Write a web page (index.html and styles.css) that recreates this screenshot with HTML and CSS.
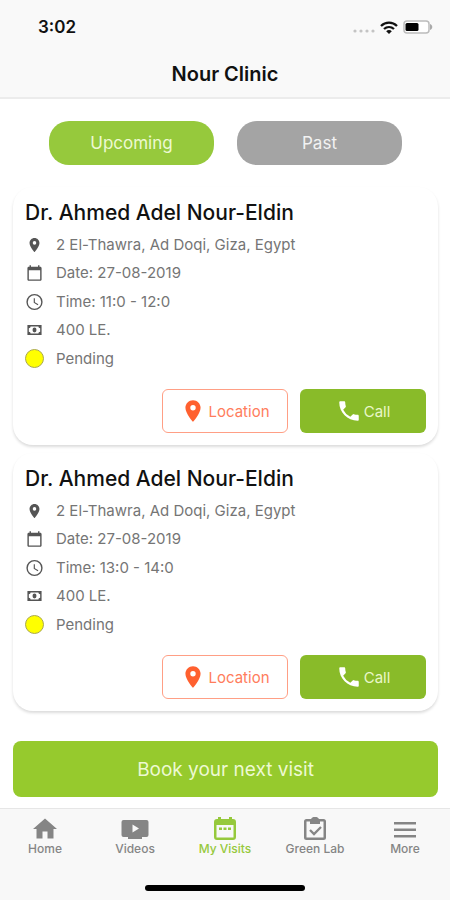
FILE: index.html
```html
<!DOCTYPE html>
<html lang="en">
<head>
<meta charset="utf-8">
<meta name="viewport" content="width=device-width, initial-scale=1">
<title>Nour Clinic</title>
<link rel="stylesheet" href="styles.css">
</head>
<body>
<svg class="sprite" aria-hidden="true">
  <symbol id="pin" viewBox="0 0 24 24"><path d="M12 2C8.130 2 5 5.130 5 9c0 5.250 7 13 7 13s7-7.750 7-13c0-3.870-3.130-7-7-7zm0 9.500a2.500 2.500 0 1 1 0-5 2.500 2.500 0 0 1 0 5z"/></symbol>
  <symbol id="calendar" viewBox="0 0 24 24"><path d="M20 3h-1V1h-2v2H7V1H5v2H4c-1.100 0-2 .9-2 2v16c0 1.100.9 2 2 2h16c1.100 0 2-.9 2-2V5c0-1.100-.9-2-2-2zm0 18H4V8h16v13z"/></symbol>
  <symbol id="clock" viewBox="1 1 22 22"><path d="M12 1.500a10.500 10.500 0 1 0 0 21 10.500 10.500 0 0 0 0-21zm0 19.200a8.700 8.700 0 1 1 0-17.400 8.700 8.700 0 0 1 0 17.400zM12.500 7H11v6l5.200 3.200.8-1.300-4.500-2.700z"/></symbol>
  <symbol id="cash" viewBox="0 0 24 24"><path fill-rule="evenodd" d="M2 5h20v14H2zM6.500 7a2.500 2.500 0 0 1-2.500 2.500v5a2.500 2.500 0 0 1 2.500 2.500h11a2.500 2.500 0 0 1 2.500-2.500v-5a2.500 2.500 0 0 1-2.500-2.500z"/><ellipse cx="12" cy="12" rx="2.800" ry="3.400"/></symbol>
  <symbol id="phone" viewBox="0 0 24 24"><path d="M20 15.500c-1.250 0-2.450-.2-3.570-.57a1.020 1.020 0 0 0-1.020.24l-2.200 2.200a15.070 15.070 0 0 1-6.590-6.580l2.200-2.210c.28-.27.36-.66.25-1.010A11.360 11.360 0 0 1 8.500 4c0-.55-.45-1-1-1H4c-.55 0-1 .45-1 1 0 9.390 7.610 17 17 17 .55 0 1-.45 1-1v-3.500c0-.55-.45-1-1-1z"/></symbol>
</svg>
<header class="header">
  <div class="status">
    <span class="time">3:02</span>
    <span class="indicators">
      <svg class="dots" viewBox="0 0 22 4" aria-hidden="true"><g fill="#c4c4c4"><circle cx="2" cy="2" r="1.600"/><circle cx="8" cy="2" r="1.600"/><circle cx="14" cy="2" r="1.600"/><circle cx="20" cy="2" r="1.600"/></g></svg>
      <svg class="wifi" viewBox="0 0 18 13" aria-hidden="true"><g fill="none" stroke="#111" stroke-width="2.300"><path d="M1 5c4.500-4.400 11.500-4.400 16 0"/><path d="M4 8c2.900-2.600 7.100-2.600 10 0"/></g><path fill="#111" d="M9 13 6.200 10.200c1.500-1.500 4.100-1.500 5.600 0z"/></svg>
      <svg class="battery" viewBox="0 0 30 14" aria-hidden="true"><rect x="1" y="1" width="25" height="12" rx="3" fill="#fff" stroke="#bcbcbc" stroke-width="1.500"/><path fill="#aaa" d="M27 4c3 1 3 5 0 6z"/><rect x="2.500" y="3" width="13" height="8" rx="1.500" fill="#000"/></svg>
    </span>
  </div>
  <h1 class="heading">Nour Clinic</h1>
</header>
<main class="main">
  <div class="filters">
    <button class="filter filter-active" type="button">Upcoming</button>
    <button class="filter" type="button">Past</button>
  </div>
  <div class="visits">
    <article class="card">
      <h2 class="doctor">Dr. Ahmed Adel Nour-Eldin</h2>
      <ul class="details">
        <li><svg class="icon"><use href="#pin"/></svg>2 El-Thawra, Ad Doqi, Giza, Egypt</li>
        <li><svg class="icon"><use href="#calendar"/></svg>Date: 27-08-2019</li>
        <li><svg class="icon"><use href="#clock"/></svg>Time: 11:0 - 12:0</li>
        <li><svg class="icon"><use href="#cash"/></svg>400 LE.</li>
        <li><span class="state"></span>Pending</li>
      </ul>
      <div class="actions">
        <button class="action location" type="button"><svg class="action-icon"><use href="#pin"/></svg>Location</button>
        <button class="action call" type="button"><svg class="action-icon"><use href="#phone"/></svg>Call</button>
      </div>
    </article>
    <article class="card">
      <h2 class="doctor">Dr. Ahmed Adel Nour-Eldin</h2>
      <ul class="details">
        <li><svg class="icon"><use href="#pin"/></svg>2 El-Thawra, Ad Doqi, Giza, Egypt</li>
        <li><svg class="icon"><use href="#calendar"/></svg>Date: 27-08-2019</li>
        <li><svg class="icon"><use href="#clock"/></svg>Time: 13:0 - 14:0</li>
        <li><svg class="icon"><use href="#cash"/></svg>400 LE.</li>
        <li><span class="state"></span>Pending</li>
      </ul>
      <div class="actions">
        <button class="action location" type="button"><svg class="action-icon"><use href="#pin"/></svg>Location</button>
        <button class="action call" type="button"><svg class="action-icon"><use href="#phone"/></svg>Call</button>
      </div>
    </article>
  </div>
  <button class="book" type="button">Book your next visit</button>
</main>
<footer class="footer">
  <nav class="tabs">
    <a class="tab" href="#home"><svg class="tab-icon" viewBox="0 0 28 24"><path d="M11.500 21.500v-7h5v7h6V12H26L14 1.500 2 12h3.500v9.500z"/></svg>Home</a>
    <a class="tab" href="#videos"><svg class="tab-icon" viewBox="0 0 28 24"><path fill-rule="evenodd" d="M2.500 3h23q2 0 2 2v13q0 2-2 2H21v2H7v-2H2.500q-2 0-2-2V5q0-2 2-2zM11.500 7.500v8l6.500-4z"/></svg>Videos</a>
    <a class="tab tab-active" href="#visits" aria-current="page"><svg class="tab-icon" viewBox="0 0 28 24"><path fill-rule="evenodd" d="M6 2h1V0h3v2h8V0h3v2h1q3 0 3 3v15q0 3-3 3H6q-3 0-3-3V5q0-3 3-3zM5.500 8v12.500h17V8zM8 10.500h3v2.500H8zm4.500 0h3v2.500h-3zm4.500 0h3v2.500h-3z"/></svg>My Visits</a>
    <a class="tab" href="#lab"><svg class="tab-icon" viewBox="0 0 28 24"><path fill-rule="evenodd" d="M5.500 2H10c1.500-3 6.500-3 8 0h4.500Q25 2 25 4.500v16q0 2.500-2.500 2.500h-17Q3 23 3 20.500v-16Q3 2 5.500 2zm0 2.500v16h17v-16H19V7H9V4.500z"/><path d="m9 13 4 4 7-7" fill="none" stroke="currentColor" stroke-width="2.300"/></svg>Green Lab</a>
    <a class="tab" href="#more"><svg class="tab-icon" viewBox="0 0 28 24"><path d="M3 5h22v2.500H3zm0 6.500h22V14H3zM3 18h22v2.500H3z"/></svg>More</a>
  </nav>
  <div class="home-bar"></div>
</footer>
</body>
</html>
```
FILE: styles.css
```css
* { box-sizing: border-box; }

body {
  display: flex;
  flex-direction: column;
  min-height: 100vh;
  margin: 0;
  background: #fff;
  color: #111;
  font-family: Inter, "Liberation Sans", sans-serif;
}

h1, h2, ul { margin: 0; padding: 0; }
button { margin: 0; padding: 0; border: 0; font: inherit; cursor: pointer; }
svg { display: block; flex: none; fill: currentColor; }
.sprite { position: absolute; width: 0; height: 0; }

.header {
  padding: 16px 16px 11px;
  border-bottom: 2px solid #ececec;
  background: #f9f9f9;
}
.status {
  display: flex;
  align-items: center;
  justify-content: space-between;
  height: 22px;
  padding: 0 1px 0 22px;
}
.time { font-size: 17px; font-weight: 600; }
.indicators { display: flex; align-items: center; gap: 5px; }
.dots { width: 22px; height: 4px; margin-top: 8px; }
.wifi { width: 18px; height: 13px; }
.battery { width: 30px; height: 14px; }
.heading {
  margin-top: 24px;
  font-size: 20px;
  font-weight: 600;
  line-height: 24px;
  text-align: center;
}

.main { flex: 1; padding: 22px 12px 10px 13px; }
.filters { display: flex; gap: 23px; padding: 0 36px; }
.filter {
  flex: 1;
  height: 44px;
  border-radius: 20px;
  background: #a4a4a4;
  color: #f2f2f2;
  font-size: 17px;
}
.filter-active { background: #96c93c; color: #edf9d2; }

.visits { display: grid; gap: 8px; margin-top: 22px; }
.card {
  padding: 14px 12px 12px;
  border-radius: 20px;
  background: #fff;
  box-shadow: 0 2px 3px #dcdcdc;
}
.doctor { font-size: 21px; font-weight: 500; line-height: 24px; }
.details {
  display: grid;
  align-content: space-between;
  height: 132px;
  margin-top: 11px;
  color: #757575;
  font-size: 15px;
  line-height: 18px;
  list-style: none;
}
.details li { display: flex; align-items: center; gap: 12px; }
.icon { width: 19px; height: 18px; padding: 0 1px; color: #555; }
.state {
  width: 19px;
  height: 19px;
  border: 1px solid #aaa84e;
  border-radius: 50%;
  background: #ff0;
}
.actions { display: flex; justify-content: flex-end; gap: 12px; margin-top: 21px; }
.action {
  display: flex;
  align-items: center;
  justify-content: center;
  gap: 2px;
  width: 126px;
  height: 44px;
  border-radius: 6px;
  font-size: 15px;
}
.action-icon { width: 26px; height: 26px; }
.location { border: 1px solid #ff9f85; background: #fff; color: #ff7d5c; }
.location .action-icon { color: #ff602f; }
.call { background: #89bb29; color: #e9f7c9; }
.call .action-icon { color: #fff; }

.book {
  width: 100%;
  height: 56px;
  margin-top: 30px;
  border-radius: 8px;
  background: #96ca2d;
  color: #edf9d2;
  font-size: 19px;
}

.footer { border-top: 1px solid #e6e6e6; background: #f8f8f8; }
.tabs { display: flex; height: 76px; padding-top: 8px; }
.tab {
  display: flex;
  flex: 1;
  flex-direction: column;
  align-items: center;
  color: #858585;
  font-size: 12px;
  font-weight: 500;
  line-height: 16px;
  text-decoration: none;
}
.tab-icon { width: 28px; height: 24px; }
.tab-active { color: #96c93c; }
.home-bar {
  width: 160px;
  height: 6px;
  margin: 0 auto 9px;
  border-radius: 3px;
  background: #000;
}
```
